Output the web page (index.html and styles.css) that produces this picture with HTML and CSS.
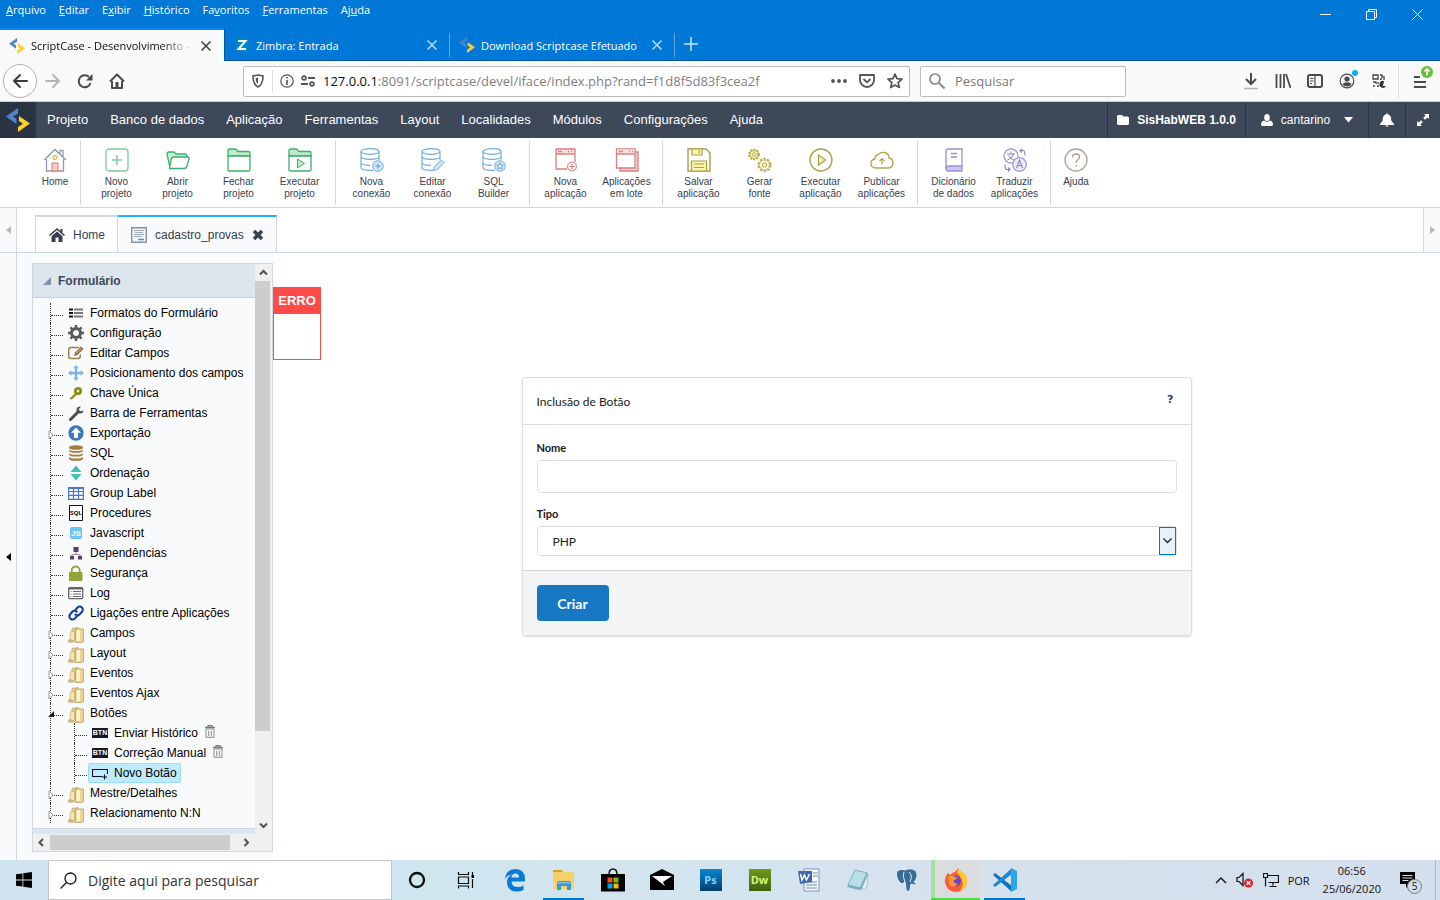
FILE: index.html
```html
<!DOCTYPE html>
<html lang="pt-br">

<head>
    <meta charset="UTF-8">
    <meta name="viewport" content="width=device-width, initial-scale=1.0">
    <title>ScriptCase - Desenvolvimento</title>
    <link rel="stylesheet" href="styles.css">
</head>

<body>
    <!-- símbolos reutilizados -->
    <svg class="defs" aria-hidden="true">
        <symbol id="sc" viewBox="0 0 24 24">
            <path d="M12 0L0 8.500 10.500 16v-5L7 8.500 12 5.500z" fill="#4f83cc" />
            <path d="M12 24l12-8.500L13 8v5l4 2.700-5 3.300z" fill="#fdcf2b" />
        </symbol>
        <symbol id="folder" viewBox="0 0 16 16">
            <path d="M4 1.500l6-1v12H4z" fill="#ead08d" stroke="#b89850" stroke-width=".6" />
            <path d="M7.500 2h8v12.500L13 15.500H7.500z" fill="#ecd595" stroke="#b3924b" stroke-width=".7" />
            <path d="M8.500 3h3.500v11H8.500z" fill="#fff3cc" />
            <path d="M2.500 4.500h4v9l-2 1.500h-3z" fill="#f7e5b1" stroke="#c5a865" stroke-width=".6" />
            <path d="M0 13l3-1 4 2-1 1.500H0z" fill="#cbb583" />
        </symbol>
        <symbol id="fechado" viewBox="0 0 6 10">
            <path d="M1 1l4 4-4 4z" fill="#fff" stroke="#999" />
        </symbol>
        <symbol id="db" viewBox="0 0 24 24">
            <g fill="none" stroke="#74aede" stroke-width="1.200">
                <ellipse cx="10" cy="3.500" rx="9" ry="2.800" />
                <path d="M1 3.500v5c0 1.600 4 2.800 9 2.800s9-1.200 9-2.800v-5M1 8.500v6c0 1.600 4 2.800 9 2.800M1 14.500v5c0 1.600 4 2.800 9 2.800h3M19 8v4" />
            </g>
        </symbol>
        <symbol id="trash" viewBox="0 0 12 13">
            <path d="M1 2.500h10M4 2V.7h4V2" fill="none" stroke="#777" stroke-width="1.300" />
            <path d="M2 4h8v8.300H2zM4.700 6v5M7.300 6v5" fill="none" stroke="#888" />
        </symbol>
        <symbol id="x" viewBox="0 0 12 12">
            <path d="M1.500 1.500l9 9M10.500 1.500l-9 9" fill="none" stroke="currentColor" stroke-width="1.500" />
        </symbol>
    </svg>

    <header class="navegador">
        <div class="titulo">
            <nav class="menu-nav">
                <a href="#"><u>A</u>rquivo</a>
                <a href="#"><u>E</u>ditar</a>
                <a href="#">E<u>x</u>ibir</a>
                <a href="#"><u>H</u>istórico</a>
                <a href="#">Fa<u>v</u>oritos</a>
                <a href="#"><u>F</u>erramentas</a>
                <a href="#">Aj<u>u</u>da</a>
            </nav>
            <div class="janela">
                <button aria-label="Minimizar"><svg width="11" height="11" viewBox="0 0 11 11"><path d="M0 5.500h11" stroke="#fff" /></svg></button>
                <button aria-label="Restaurar"><svg width="11" height="11" viewBox="0 0 11 11"><path d="M.5 2.500h8v8h-8zM2.500 2.500v-2h8v8h-2" fill="none" stroke="#fff" /></svg></button>
                <button aria-label="Fechar"><svg width="11" height="11" viewBox="0 0 11 11"><path d="M.5.5l10 10M10.500.5l-10 10" stroke="#fff" /></svg></button>
            </div>
        </div>

        <div class="guias">
            <div class="guia ativa">
                <svg width="16" height="16"><use href="#sc" /></svg>
                <span class="nome-guia">ScriptCase - Desenvolvimento -</span>
                <button aria-label="Fechar guia"><svg width="12" height="12"><use href="#x" /></svg></button>
            </div>
            <div class="guia">
                <svg width="16" height="16" viewBox="0 0 16 16"><rect x="1" y="1" width="14" height="14" rx="2" fill="#0087c3" /><path d="M4 4h7.500L4.500 12h7.500" fill="none" stroke="#fff" stroke-width="2" /></svg>
                <span class="nome-guia">Zimbra: Entrada</span>
                <button aria-label="Fechar guia"><svg width="12" height="12"><use href="#x" /></svg></button>
            </div>
            <div class="guia">
                <svg width="16" height="16"><use href="#sc" /></svg>
                <span class="nome-guia">Download Scriptcase Efetuado</span>
                <button aria-label="Fechar guia"><svg width="12" height="12"><use href="#x" /></svg></button>
            </div>
            <button class="nova-guia" aria-label="Nova guia"><svg width="14" height="14" viewBox="0 0 14 14"><path d="M7 0v14M0 7h14" stroke="#cfe6fa" stroke-width="1.500" /></svg></button>
        </div>

        <div class="barra-url">
            <div class="botoes-nav">
                <button class="voltar" aria-label="Voltar"><svg width="16" height="16" viewBox="0 0 16 16"><path d="M15 8H2M8 2L2 8l6 6" fill="none" stroke="#3b3b3d" stroke-width="2" stroke-linecap="round" stroke-linejoin="round" /></svg></button>
                <button aria-label="Avançar"><svg width="16" height="16" viewBox="0 0 16 16"><path d="M1 8h13M8 2l6 6-6 6" fill="none" stroke="#b5b5b6" stroke-width="2" stroke-linecap="round" stroke-linejoin="round" /></svg></button>
                <button aria-label="Recarregar"><svg width="16" height="16" viewBox="0 0 16 16"><path d="M13.500 10A6 6 0 1 1 12 4" fill="none" stroke="#4a4a4c" stroke-width="2" /><path d="M15.500 1v6.500H9z" fill="#4a4a4c" /></svg></button>
                <button aria-label="Página inicial"><svg width="16" height="16" viewBox="0 0 16 16"><path d="M1 8.500L8 1.500l7 7M3 8v7h10V8" fill="none" stroke="#4a4a4c" stroke-width="2" stroke-linejoin="round" /><path d="M6.500 9h3v6h-3z" fill="#4a4a4c" /></svg></button>
            </div>
            <div class="endereco">
                <svg width="14" height="14" viewBox="0 0 14 14"><path d="M7 1l5 1c0 6-1 9-5 11C3 11 2 8 2 2z" fill="none" stroke="#555" stroke-width="1.600" /><path d="M7 3.500v6.500c-2-1.500-2.300-3-2.300-6z" fill="#555" /></svg>
                <span class="risco"></span>
                <svg width="14" height="14" viewBox="0 0 14 14"><circle cx="7" cy="7" r="6.200" fill="none" stroke="#555" stroke-width="1.200" /><path d="M7 6v5M7 3v1.600" stroke="#555" stroke-width="1.600" /></svg>
                <svg width="14" height="12" viewBox="0 0 14 12"><g fill="none" stroke="#555" stroke-width="1.800"><circle cx="3" cy="3" r="1.900" /><path d="M7 3h7M0 9h7" /><circle cx="11" cy="9" r="1.900" /></g></svg>
                <a class="url" href="#"><b>127.0.0.1</b>:8091/scriptcase/devel/iface/index.php?rand=f1d8f5d83f3cea2f</a>
                <svg width="16" height="16" viewBox="0 0 16 16" fill="#555"><circle cx="2" cy="8" r="1.900" /><circle cx="8" cy="8" r="1.900" /><circle cx="14" cy="8" r="1.900" /></svg>
                <svg width="16" height="16" viewBox="0 0 16 16"><path d="M1 2h14v5a7 7 0 0 1-14 0z" fill="none" stroke="#555" stroke-width="1.800" stroke-linejoin="round" /><path d="M4.500 6L8 9.300 11.500 6" fill="none" stroke="#555" stroke-width="1.800" /></svg>
                <svg width="16" height="16" viewBox="0 0 16 16"><path d="M8 1l2 4.600 5 .5-3.800 3.400 1.100 5L8 12l-4.300 2.500 1.100-5L1 6.100l5-.5z" fill="none" stroke="#555" stroke-width="1.700" stroke-linejoin="round" /></svg>
            </div>
            <div class="busca">
                <svg width="16" height="16" viewBox="0 0 16 16"><circle cx="6" cy="6" r="5" fill="none" stroke="#888" stroke-width="1.700" /><path d="M10 10l5.500 5.500" stroke="#888" stroke-width="2" /></svg>
                <input type="text" placeholder="Pesquisar" aria-label="Pesquisar">
            </div>
            <div class="extras">
                <button aria-label="Downloads"><svg width="16" height="18" viewBox="0 0 16 18"><path d="M8 1v11M3 7l5 5 5-5" fill="none" stroke="#4a4a4c" stroke-width="2" /><path d="M1 16.500h14" stroke="#b5b5b6" stroke-width="1.500" /></svg></button>
                <button aria-label="Biblioteca"><svg width="16" height="16" viewBox="0 0 16 16"><path d="M1.500 1v14M5.500 1v14M9 1v14M11 1l4.500 14" stroke="#4a4a4c" stroke-width="1.800" /></svg></button>
                <button aria-label="Painel"><svg width="16" height="16" viewBox="0 0 16 16"><rect x="1" y="2" width="14" height="12" rx="2" fill="none" stroke="#4a4a4c" stroke-width="2" /><path d="M8 2v12M3 5.500h3.500M3 8h3.500M3 10.500h2" stroke="#4a4a4c" stroke-width="1.200" /></svg></button>
                <button class="conta" aria-label="Conta"><svg width="16" height="16" viewBox="0 0 16 16"><circle cx="8" cy="8" r="6.800" fill="none" stroke="#4a4a4c" stroke-width="1.200" /><circle cx="8" cy="6" r="2.600" fill="#4a4a4c" /><path d="M3.500 11.500C5 8.500 11 8.500 12.500 11.500 10 14 6 14 3.500 11.500z" fill="#4a4a4c" /></svg></button>
                <button aria-label="Extensão"><svg width="16" height="16" viewBox="0 0 16 16"><rect width="16" height="16" fill="#fff" /><path d="M2 2h5v4H2zM9 2h2v2h3M13 5v2M9 6h2M2 9h3v2M7 9v2M2 13h2M6 13h2" fill="none" stroke="#444" stroke-width="1.300" /><path d="M13 8a3.500 3.500 0 1 0 2 5h-3z" fill="#333" /></svg></button>
                <button class="hamburguer" aria-label="Menu"><svg width="14" height="14" viewBox="0 0 14 14"><path d="M1 3h6M1 8h12M1 13h12" stroke="#4a4a4c" stroke-width="1.800" /></svg><svg class="atualizar" width="12" height="12" viewBox="0 0 12 12"><circle cx="6" cy="6" r="6" fill="#6bbb3f" /><path d="M6 9.500V3M3.300 5.500L6 2.800l2.700 2.700" fill="none" stroke="#fff" stroke-width="1.500" /></svg></button>
            </div>
        </div>
    </header>

    <nav class="menu-app">
        <a class="logo" href="#" aria-label="Scriptcase"><svg width="24" height="24"><use href="#sc" /></svg></a>
        <div class="links">
            <a href="#">Projeto</a>
            <a href="#">Banco de dados</a>
            <a href="#">Aplicação</a>
            <a href="#">Ferramentas</a>
            <a href="#">Layout</a>
            <a href="#">Localidades</a>
            <a href="#">Módulos</a>
            <a href="#">Configurações</a>
            <a href="#">Ajuda</a>
        </div>
        <button class="projeto"><svg width="12" height="12" viewBox="0 0 12 12"><path d="M0 2l1-1h4l1 1.500h5l1 1V10l-1 1H1l-1-1z" fill="#fff" /></svg>SisHabWEB 1.0.0</button>
        <button class="usuario"><svg width="12" height="12" viewBox="0 0 12 12"><ellipse cx="6" cy="3.500" rx="2.800" ry="3.500" fill="#fff" /><path d="M3 6.500Q6 9 9 6.500q3 .5 3 4.500l-1 1H1l-1-1q0-4 3-4.500z" fill="#fff" /></svg>cantarino<svg class="seta" width="9" height="6" viewBox="0 0 9 6"><path d="M0 0h9L4.500 5.500z" fill="#fff" /></svg></button>
        <button class="sino" aria-label="Notificações"><svg width="14" height="14" viewBox="0 0 14 14"><path d="M7 0l1 1.500C11 2 11 5 11.500 8L14 11v1H0v-1l2.500-3C3 5 3 2 6 1.500zM5 12.500h4L7 14z" fill="#fff" /></svg></button>
        <button class="expandir" aria-label="Tela cheia"><svg width="12" height="12" viewBox="0 0 12 12"><path d="M7 0h5v5l-1.600-1.600L8 5.800 6.200 4l2.400-2.400zM5 12H0V7l1.600 1.600L4 6.200 5.800 8l-2.400 2.400z" fill="#fff" /></svg></button>
    </nav>

    <div class="ferramentas">
        <div class="grupo curto">
            <button><svg width="24" height="24" viewBox="0 0 24 24"><path d="M1 12L12 1.500 23 12M3.500 11v12h17V11M17 6V2.500h3V9" fill="none" stroke="#8f99ad" stroke-width="1.300" /><circle cx="12" cy="9.500" r="2" fill="#fdf3b0" stroke="#c6a93b" /><path d="M9 23v-8h6v8z" fill="#ffc9c9" stroke="#e07a7a" /></svg>Home</button>
        </div>
        <div class="grupo">
            <button><svg width="24" height="24" viewBox="0 0 24 24"><rect x="1" y="1" width="22" height="22" rx="3" fill="none" stroke="#7ecb99" stroke-width="1.300" /><path d="M12 7v10M7 12h10" stroke="#7ecb99" stroke-width="1.500" /></svg>Novo<br>projeto</button>
            <button><svg width="24" height="24" viewBox="0 0 24 24"><path d="M4 20L1 6q0-2 2-2h5l2 2h9q2 0 2 3" fill="#c7efd3" stroke="#3bb06b" stroke-width="1.300" /><path d="M3.500 20.500L5 12q.5-3 3-3h14q1.500 0 1 2l-2 7q-.7 2.500-3 2.500z" fill="#fff" stroke="#3bb06b" stroke-width="1.300" /></svg>Abrir<br>projeto</button>
            <button><svg width="24" height="24" viewBox="0 0 24 24"><path d="M1 8V2.500Q1 1 2.500 1h6L11 3.500h10.500Q23 3.500 23 5v3z" fill="#bdebcb" stroke="#3bb06b" stroke-width="1.300" /><path d="M1 8h22v13.500q0 1.500-1.500 1.500h-19Q1 23 1 21.500z" fill="#fff" stroke="#3bb06b" stroke-width="1.300" /></svg>Fechar<br>projeto</button>
            <button><svg width="24" height="24" viewBox="0 0 24 24"><path d="M1 8V2.500Q1 1 2.500 1h6L11 3.500h10.500Q23 3.500 23 5v3z" fill="#bdebcb" stroke="#3bb06b" stroke-width="1.300" /><path d="M1 8h22v13.500q0 1.500-1.500 1.500h-19Q1 23 1 21.500z" fill="#fff" stroke="#3bb06b" stroke-width="1.300" /><path d="M9.500 11l7 4.500-7 4.500z" fill="#bdebcb" stroke="#3bb06b" /></svg>Executar<br>projeto</button>
        </div>
        <div class="grupo">
            <button><svg width="24" height="24" viewBox="0 0 24 24"><use href="#db" /><circle cx="18" cy="18" r="5.300" fill="#cfe5f8" stroke="#74aede" /><path d="M18 15.500v5M15.500 18h5" stroke="#5b98cf" /></svg>Nova<br>conexão</button>
            <button><svg width="24" height="24" viewBox="0 0 24 24"><use href="#db" /><path d="M12.500 22.500l1-4 7-6.500 2.500 2.500-6.500 7z" fill="#cfe5f8" stroke="#74aede" /></svg>Editar<br>conexão</button>
            <button><svg width="24" height="24" viewBox="0 0 24 24"><use href="#db" /><circle cx="18" cy="18" r="5.300" fill="#cfe5f8" stroke="#74aede" /><path d="M18 14.800l1 2.200 2.200.2-1.700 1.500.5 2.300-2-1.200-2 1.200.5-2.300-1.700-1.500 2.200-.2z" fill="#fff" stroke="#5b98cf" stroke-width=".9" /></svg>SQL<br>Builder</button>
        </div>
        <div class="grupo">
            <button><svg width="24" height="24" viewBox="0 0 24 24"><path d="M2 1h19v5H2z" fill="#fbe0e0" /><path d="M2 1h19v13M2 1v20h11M2 6h19M4 3.500h4M14 3.500h1M17 3.500h1" fill="none" stroke="#d98080" stroke-width="1.300" /><circle cx="18" cy="18.500" r="4.500" fill="#fdeaea" stroke="#d98080" /><path d="M18 16v5M15.500 18.500h5" stroke="#d98080" /></svg>Nova<br>aplicação</button>
            <button><svg width="24" height="24" viewBox="0 0 24 24"><path d="M20 4h3v19H5v-3" fill="#f8cfcf" stroke="#d98080" stroke-width="1.300" /><path d="M1.500 1H20v19H1.500z" fill="#fff" stroke="#d98080" stroke-width="1.300" /><path d="M2 1.500h17.500V6H2z" fill="#fbe0e0" /><path d="M2 6h18M4 3.500h4M14 3.500h1M17 3.500h1" stroke="#d98080" stroke-width="1.300" /></svg>Aplicações<br>em lote</button>
        </div>
        <div class="grupo">
            <button><svg width="24" height="24" viewBox="0 0 24 24"><path d="M1 1h18l4 4v18H1z" fill="#fff" stroke="#ab9f45" stroke-width="1.400" /><path d="M5 1h10v6H5z" fill="#fbf4a9" stroke="#ab9f45" stroke-width="1.200" /><path d="M12 2.500v3" stroke="#ab9f45" stroke-width="1.300" /><path d="M4.500 13h15v10h-15z" fill="#fbf4a9" stroke="#ab9f45" stroke-width="1.200" /><path d="M7 16h10M7 19.500h10" stroke="#ab9f45" stroke-width="1.200" /></svg>Salvar<br>aplicação</button>
            <button><svg width="24" height="24" viewBox="0 0 24 24"><g fill="#fbf4a9" stroke="#b3a346"><circle cx="6" cy="6.500" r="5" stroke-width="1.600" stroke-dasharray="2 1.200" /><circle cx="6" cy="6.500" r="4" stroke-width=".8" /><circle cx="6" cy="6.500" r="1.600" fill="#fff" /><circle cx="16.500" cy="17" r="6.200" fill="#fff" stroke-width="1.600" stroke-dasharray="2.500 1.400" /><circle cx="16.500" cy="17" r="5" fill="#fff" stroke-width=".9" /><circle cx="16.500" cy="17" r="2.200" /></g></svg>Gerar<br>fonte</button>
            <button><svg width="24" height="24" viewBox="0 0 24 24"><circle cx="12" cy="12" r="11" fill="none" stroke="#ab9f45" stroke-width="1.300" /><path d="M9.500 7l7 5-7 5z" fill="#fbf4a9" stroke="#ab9f45" stroke-width="1.200" /></svg>Executar<br>aplicação</button>
            <button><svg width="24" height="24" viewBox="0 0 24 24"><path d="M6 20q-5 0-5-4.500 0-4 4-4.500 0-4 3.500-4.500Q10.500 4 14.500 4.500 19 5.500 19 10q4 1 4 5 0 5-5 5z" fill="none" stroke="#b5a34e" stroke-width="1.300" /><path d="M12 16.500v-6M9.500 13l2.500-2.500 2.500 2.500" fill="none" stroke="#b5a34e" stroke-width="1.200" /></svg>Publicar<br>aplicações</button>
        </div>
        <div class="grupo">
            <button><svg width="24" height="24" viewBox="0 0 24 24"><path d="M4 21V3q0-2 2-2h14v17" fill="#fff" stroke="#9c8fd4" stroke-width="1.300" /><path d="M20 18v5H6q-2 0-2-2.500T6 18z" fill="#cdc4f0" stroke="#9c8fd4" stroke-width="1.300" /><path d="M9 5.500h6M9 9h6" stroke="#9c8fd4" stroke-width="1.300" /></svg>Dicionário<br>de dados</button>
            <button><svg width="24" height="24" viewBox="0 0 24 24"><circle cx="8" cy="8" r="7" fill="#fff" stroke="#a79bda" stroke-width="1.300" /><path d="M4 6h8M8 3.500V6M10.500 6Q9 10.500 4.500 12M5.500 7.500q2 3.500 5.500 4.500" fill="none" stroke="#8b7ec9" /><circle cx="16.500" cy="16.500" r="6.800" fill="#eeeafb" stroke="#a79bda" stroke-width="1.300" /><path d="M13.500 20l3-8 3 8M14.500 17.500h4M17 2.500h3q2 0 2 5M19 1l-2 1.500 2 2M7 21.500H4q-2 0-2-5M5 19.500l2 2-2 2" fill="none" stroke="#8b7ec9" stroke-width="1.100" /></svg>Traduzir<br>aplicações</button>
        </div>
        <div class="grupo curto">
            <button><svg width="24" height="24" viewBox="0 0 24 24"><circle cx="12" cy="12" r="11" fill="none" stroke="#b0a398" stroke-width="1.300" /><path d="M8.500 9.500q0-3.500 3.500-3.500t3.500 3q0 1.500-2 3-1.500 1-1.500 3M12 17v1.500" fill="none" stroke="#a89b90" stroke-width="1.300" /></svg>Ajuda</button>
        </div>
    </div>

    <div class="abas">
        <button class="rolar esquerda" aria-label="Rolar para a esquerda"><svg width="5" height="8" viewBox="0 0 5 8"><path d="M5 0v8L0 4z" fill="#b5b9be" /></svg></button>
        <div class="lista-abas">
            <a class="aba" href="#"><svg width="16" height="14" viewBox="0 0 16 14"><path d="M8 0L0 7l1 1 7-6 7 6 1-1-2.500-2.200V1h-2v2z" fill="#37404f" /><path d="M8 3.500l5.500 4.700V14H9.500V9.500h-3V14h-4V8.200z" fill="#37404f" /></svg>Home</a>
            <a class="aba atual" href="#"><svg width="16" height="16" viewBox="0 0 16 16"><path d="M.7.7h14.600v14.600H.7z" fill="#f5f8fc" stroke="#8b929c" stroke-width="1.400" /><path d="M3 3.500h10M4 5.500h8M3 7.500h10M3 9.500h8" stroke="#9ba9bb" /><path d="M7 12.500h6" stroke="#2fa6c5" stroke-width="1.500" /></svg>cadastro_provas<svg width="12" height="12" viewBox="0 0 12 12"><path d="M2 2l8 8M10 2l-8 8" stroke="#37404f" stroke-width="3.500" /></svg></a>
        </div>
        <button class="rolar direita" aria-label="Rolar para a direita"><svg width="5" height="8" viewBox="0 0 5 8"><path d="M0 0v8l5-4z" fill="#b5b9be" /></svg></button>
    </div>

    <main class="corpo">
        <button class="recolher" aria-label="Recolher painel"><svg width="5" height="8" viewBox="0 0 5 8"><path d="M5 0v8L0 4z" fill="#000" /></svg></button>

        <aside class="lateral">
            <div class="painel">
                <div class="conteudo-painel">
                    <h2><svg width="8" height="8" viewBox="0 0 8 8"><path d="M8 0v8H0z" fill="#8392a8" /></svg>Formulário</h2>
                    <ul class="arvore">
                        <li><a href="#"><svg width="16" height="16" viewBox="0 0 16 16"><path d="M1 4.500h4M1 8h4M1 11.500h4" stroke="#111" stroke-width="2" /><path d="M6 4.500h9M6 8h9M6 11.500h9" stroke="#777" stroke-width="2" /></svg>Formatos do Formulário</a></li>
                        <li><a href="#"><svg width="16" height="16" viewBox="0 0 16 16"><circle cx="8" cy="8" r="4.500" fill="none" stroke="#5a5a5a" stroke-width="3" /><path d="M8 0v3M8 13v3M0 8h3M13 8h3M2.400 2.400l2 2M11.600 11.600l2 2M13.600 2.400l-2 2M4.400 11.600l-2 2" stroke="#5a5a5a" stroke-width="2.500" /></svg>Configuração</a></li>
                        <li><a href="#"><svg width="16" height="16" viewBox="0 0 16 16"><path d="M11 2.500H3Q.7 2.500.7 5v6q0 2.500 2.300 2.500h7q2.300 0 2.300-2.500V9.500" fill="none" stroke="#a07b4c" stroke-width="1.400" /><path d="M6 11l1-3.500 6-6 2.500 2.500-6 6z" fill="#8c6a3c" /><path d="M8 8.500l5-5" stroke="#e6cfa8" /></svg>Editar Campos</a></li>
                        <li><a href="#"><svg width="16" height="16" viewBox="0 0 16 16"><path d="M8 0l3 3.300H9.200v3.500h3.500V5L16 8l-3.300 3V9.200H9.200v3.500H11L8 16l-3-3.300h1.800V9.200H3.300V11L0 8l3.300-3v1.800h3.500V3.300H5z" fill="#7eb5e8" /></svg>Posicionamento dos campos</a></li>
                        <li><a href="#"><svg width="16" height="16" viewBox="0 0 16 16"><path d="M8 7.500l2 2-2 .5-.5 1.500-1.500.2-.4 1.500-1.600.5L2.500 15 2 13z" fill="#8f8f12" /><circle cx="10" cy="6" r="2.700" fill="none" stroke="#8f8f12" stroke-width="2.800" /></svg>Chave Única</a></li>
                        <li><a href="#"><svg width="16" height="16" viewBox="0 0 16 16"><path d="M2.500 14.500l7-7" stroke="#4c4c4c" stroke-width="3" stroke-linecap="round" /><path d="M13 1.500Q9 1 8.500 4.500t3 4 4-3l-3 .7-2-1.700z" fill="#4c4c4c" /></svg>Barra de Ferramentas</a></li>
                        <li><svg class="marca" width="6" height="10"><use href="#fechado" /></svg><a href="#"><svg width="16" height="16" viewBox="0 0 16 16"><circle cx="8" cy="8" r="7.700" fill="#3d79b8" /><path d="M8 2.500l5 5.200h-3V13H6V7.700H3z" fill="#fff" /></svg>Exportação</a></li>
                        <li><a href="#"><svg width="16" height="16" viewBox="0 0 16 16" fill="#a37c3d"><ellipse cx="8" cy="2.500" rx="7" ry="2.300" /><path d="M1 4q0 2 7 2t7-2v1.500q0 2.300-7 2.300T1 5.500zM1 7.700q0 2 7 2t7-2v1.500q0 2.300-7 2.300T1 9.200zM1 11.400q0 2 7 2t7-2v1.800q0 2.600-7 2.600T1 13.200z" /></svg>SQL</a></li>
                        <li><a href="#"><svg width="16" height="16" viewBox="0 0 16 16"><path d="M8 .5L13.500 7h-11zM8 15.500L13.500 9h-11z" fill="#45c1b8" /></svg>Ordenação</a></li>
                        <li><a href="#"><svg width="16" height="16" viewBox="0 0 16 16"><path d="M.6 2.500h14.800v11.800H.6zM.6 6.500h14.800M.6 10.300h14.800M5.500 3v11M10.500 3v11" fill="none" stroke="#4a76d8" stroke-width="1.200" /><path d="M0 2h16v2H0z" fill="#4a76d8" /></svg>Group Label</a></li>
                        <li><a href="#"><svg width="16" height="16" viewBox="0 0 16 16"><path d="M1.500.5h13v15h-13z" fill="#fff" stroke="#111" /><text class="txt-sql" x="8" y="10" text-anchor="middle">SQL</text></svg>Procedures</a></li>
                        <li><a href="#"><svg width="16" height="16" viewBox="0 0 16 16"><rect x="2" y="2" width="12" height="12" rx="2" fill="#6cc3f5" /><text class="txt-js" x="8" y="11" text-anchor="middle">JS</text></svg>Javascript</a></li>
                        <li><a href="#"><svg width="16" height="16" viewBox="0 0 16 16"><path d="M8 7v3M4 12V9.500h8V12" fill="none" stroke="#9f93ad" stroke-width="1.200" /><path d="M5.500 2h5v5h-5zM2 11h4v3.500H2zM10 11h4v3.500h-4z" fill="#563d6b" /></svg>Dependências</a></li>
                        <li><a href="#"><svg width="16" height="16" viewBox="0 0 16 16"><path d="M3.700 8V5.500a4 4 0 0 1 8 0V8" fill="none" stroke="#96a23a" stroke-width="1.800" /><rect x="1" y="7" width="13.500" height="9" rx="1" fill="#96a23a" /></svg>Segurança</a></li>
                        <li><a href="#"><svg width="16" height="16" viewBox="0 0 16 16"><rect x=".7" y="2.700" width="14" height="11" rx="1" fill="#fff" stroke="#666" stroke-width="1.300" /><path d="M1 3.500h14" stroke="#666" stroke-width="2" /><path d="M2.500 6.500h1M2.500 9h1M2.500 11.500h1M5 6.500h8M5 9h8M5 11.500h8" stroke="#666" /></svg>Log</a></li>
                        <li><a href="#"><svg width="16" height="16" viewBox="0 0 16 16"><g fill="none" stroke="#1b3f9c" stroke-width="2.100" stroke-linecap="round"><path d="M7 5.500l2.500-3a3 3 0 0 1 4.500 4.300L11.500 9.500a3 3 0 0 1-4 0" /><path d="M9.500 10.500L7 13.300A3 3 0 0 1 2 9.500l2.500-3a3 3 0 0 1 4.300.2" /></g></svg>Ligações entre Aplicações</a></li>
                        <li><svg class="marca" width="6" height="10"><use href="#fechado" /></svg><a href="#"><svg class="pasta" width="16" height="16"><use href="#folder" /></svg>Campos</a></li>
                        <li><svg class="marca" width="6" height="10"><use href="#fechado" /></svg><a href="#"><svg class="pasta" width="16" height="16"><use href="#folder" /></svg>Layout</a></li>
                        <li><svg class="marca" width="6" height="10"><use href="#fechado" /></svg><a href="#"><svg class="pasta" width="16" height="16"><use href="#folder" /></svg>Eventos</a></li>
                        <li><svg class="marca" width="6" height="10"><use href="#fechado" /></svg><a href="#"><svg class="pasta" width="16" height="16"><use href="#folder" /></svg>Eventos Ajax</a></li>
                        <li><svg class="marca" width="6" height="10" viewBox="0 0 6 10"><path d="M6 1v6H0z" fill="#222" /></svg><a href="#"><svg class="pasta" width="16" height="16"><use href="#folder" /></svg>Botões</a>
                            <ul>
                                <li><a href="#"><span class="btn-mini">BTN</span>Enviar Histórico</a><button class="lixo" aria-label="Excluir"><svg width="12" height="13"><use href="#trash" /></svg></button></li>
                                <li><a href="#"><span class="btn-mini">BTN</span>Correção Manual</a><button class="lixo" aria-label="Excluir"><svg width="12" height="13"><use href="#trash" /></svg></button></li>
                                <li class="marcado"><a href="#"><svg width="16" height="14" viewBox="0 0 16 14"><path d="M10 10.500H.5v-7h15V8M12.500 8.500v5M10 11h5" fill="none" stroke="#111" stroke-width="1.100" /></svg>Novo Botão</a></li>
                            </ul>
                        </li>
                        <li><svg class="marca" width="6" height="10"><use href="#fechado" /></svg><a href="#"><svg class="pasta" width="16" height="16"><use href="#folder" /></svg>Mestre/Detalhes</a></li>
                        <li><svg class="marca" width="6" height="10"><use href="#fechado" /></svg><a href="#"><svg class="pasta" width="16" height="16"><use href="#folder" /></svg>Relacionamento N:N</a></li>
                    </ul>
                </div>
                <div class="barra-v">
                    <svg width="17" height="17" viewBox="0 0 17 17"><path d="M5 10.500L8.500 7l3.500 3.500" fill="none" stroke="#505050" stroke-width="2" /></svg>
                    <div class="trilho"><div class="polegar"></div></div>
                    <svg width="17" height="17" viewBox="0 0 17 17"><path d="M5 6.500L8.500 10 12 6.500" fill="none" stroke="#505050" stroke-width="2" /></svg>
                </div>
                <div class="barra-h">
                    <svg width="17" height="17" viewBox="0 0 17 17"><path d="M10 5L6.500 8.500 10 12" fill="none" stroke="#505050" stroke-width="2" /></svg>
                    <div class="trilho"><div class="polegar"></div></div>
                    <svg width="17" height="17" viewBox="0 0 17 17"><path d="M6.500 5L10 8.500 6.500 12" fill="none" stroke="#505050" stroke-width="2" /></svg>
                </div>
                <div class="canto"></div>
            </div>
        </aside>

        <section class="area">
            <div class="erro"><strong>ERRO</strong></div>

            <form class="cartao">
                <div class="topo-cartao">
                    <span>Inclusão de Botão</span>
                    <a href="#" aria-label="Ajuda">?</a>
                </div>
                <div class="campos">
                    <label for="nome">Nome</label>
                    <input id="nome" type="text">
                    <label for="tipo">Tipo</label>
                    <div class="caixa-tipo">
                        <select id="tipo">
                            <option>PHP</option>
                            <option>Javascript</option>
                            <option>Ajax</option>
                            <option>Link</option>
                        </select>
                        <span class="abrir"><svg width="9" height="6" viewBox="0 0 9 6"><path d="M.5.5l4 4 4-4" fill="none" stroke="#222" stroke-width="1.300" /></svg></span>
                    </div>
                </div>
                <div class="rodape-cartao">
                    <button type="button">Criar</button>
                </div>
            </form>
        </section>
    </main>

    <footer class="tarefas">
        <button class="iniciar" aria-label="Iniciar"><svg width="16" height="16" viewBox="0 0 16 16"><path d="M0 2.300L6.500 1.400v6.200H0zM7.300 1.300L16 0v7.600H7.300zM0 8.400h6.500v6.200L0 13.700zM7.300 8.400H16V16l-8.700-1.300z" /></svg></button>
        <div class="procurar">
            <svg width="17" height="17" viewBox="0 0 17 17"><circle cx="10.500" cy="6.500" r="5.500" fill="none" stroke="#111" stroke-width="1.300" /><path d="M6.500 10.500L.5 16.500" stroke="#111" stroke-width="1.300" /></svg>
            <input type="text" placeholder="Digite aqui para pesquisar" aria-label="Digite aqui para pesquisar">
        </div>
        <div class="apps">
            <button aria-label="Cortana"><svg width="18" height="18" viewBox="0 0 18 18"><circle cx="9" cy="9" r="7" fill="none" stroke="#111" stroke-width="2.300" /></svg></button>
            <button aria-label="Visão de tarefas"><svg width="18" height="18" viewBox="0 0 18 18"><path d="M1.500 1v2.500h10V1M1.500 6h10v6.500h-10zM1.500 17.500V15h10v2.500M15.500 1v3M15.500 8v9" fill="none" stroke="#111" stroke-width="1.200" /><path d="M14.500 4h2.500v3h-2.500z" /></svg></button>
            <button aria-label="Edge"><svg width="22" height="24" viewBox="0 0 22 24"><path d="M1 11Q2 1 11.500 1 21 1.500 21 11v2.500H7.500Q8 19 13.500 19q3.500 0 6-1.500V22q-3 1.500-7 1.500Q3 23 3 14q0-5 5-7.500Q3 7 1 11zM7.500 9.500H15Q15 5.500 11.500 5.500T7.500 9.500z" fill="#0a7ad6" /></svg></button>
            <button class="rodando" aria-label="Explorador"><svg width="22" height="22" viewBox="0 0 22 22"><path d="M0 1h9l2 2h10v17H0z" fill="#f8d069" /><path d="M0 1h9l1 2H0z" fill="#dfa022" /><path d="M4 21v-7q0-2 2-2h10q2 0 2 2v7h-4v-4H8v4z" fill="#3d97d9" /><path d="M5 13h12v1.500H5z" fill="#7cc3ee" /></svg></button>
            <button aria-label="Loja"><svg width="24" height="26" viewBox="0 0 24 26"><path d="M0 7h24v17.500H0z" /><path d="M8 7.500Q8 2 12 2t4 5.500" fill="none" stroke="#111" stroke-width="1.500" /><path d="M6.500 10.500h5v5h-5z" fill="#f25022" /><path d="M12.500 10.500h5v5h-5z" fill="#7fba00" /><path d="M6.500 16.500h5v5h-5z" fill="#00a4ef" /><path d="M12.500 16.500h5v5h-5z" fill="#ffb900" /></svg></button>
            <button aria-label="Email"><svg width="24" height="22" viewBox="0 0 24 22"><path d="M12 0l12 6v15H0V6z" /><path d="M2 7h20l-9 6 2 4z" fill="#f3f7fa" /></svg></button>
            <button aria-label="Photoshop"><span class="adobe ps">Ps</span></button>
            <button aria-label="Dreamweaver"><span class="adobe dw">Dw</span></button>
            <button aria-label="Word"><svg width="24" height="24" viewBox="0 0 24 24"><path d="M7 1h15v22H7z" fill="#f6f9fd" stroke="#7d93b8" /><path d="M16 5h5M16 8h5M9 14h11M9 17h11M9 20h11" stroke="#6d88ba" /><path d="M1 3h14v11L3 16z" fill="#4068b1" /><path d="M3.500 6l1.500 6 2.500-5 2 5 3-6" fill="none" stroke="#fff" stroke-width="1.500" /></svg></button>
            <button aria-label="Bloco de notas"><svg width="24" height="24" viewBox="0 0 24 24"><path d="M9 2l13 3-5 16-4 1L1 19z" fill="#7cb2c0" /><path d="M9 2l12 3-7 15-12-3z" fill="#b8dfe8" stroke="#6f9eab" stroke-width=".7" /><path d="M22 6l-1 13-6 3z" fill="#e8f2f5" stroke="#8aa" stroke-width=".6" /></svg></button>
            <button aria-label="PostgreSQL"><svg width="24" height="24" viewBox="0 0 24 24"><path d="M2 3Q6 0 10 2q6-3 11 1 3 6-2 11l3 1q-2 3-6 1l-1 6q-3 3-4-1l-1-7q-3 3-5 1Q0 8 2 3z" fill="#3a6c98" stroke="#e6eef5" /><path d="M9 4Q7 8 10 14M14 4q4 3 1 10" fill="none" stroke="#e6eef5" /></svg></button>
            <button class="rodando foco" aria-label="Firefox"><svg width="24" height="24" viewBox="0 0 24 24"><path d="M2 8l2-3 2 2q3-3 5-3l3-4q1 3 4 4 5 3 5 9a11 11 0 0 1-22 0q0-3 1-5z" fill="#ff5a36" /><path d="M14 0q1 3 4 4 5 3 5 9 0 7-7 10 4-6 2-11T13 5z" fill="#ffc928" /><circle cx="11.500" cy="13" r="5.500" fill="#6b46c5" /><path d="M4 8q4-1 7 1l3 1-4 2q-2 3 4 4-5 5-9 0z" fill="#ff9633" /></svg></button>
            <button class="rodando" aria-label="VS Code"><svg width="26" height="26" viewBox="0 0 26 26"><path d="M1 8l2-2 17 13v6z" fill="#1071bd" /><path d="M1 18l2 2L20 7V1z" fill="#2088d2" /><path d="M19 1l6 3v18l-6 3z" fill="#2ba6ee" /></svg></button>
        </div>
        <div class="bandeja">
            <svg width="12" height="8" viewBox="0 0 12 8"><path d="M1 7l5-5 5 5" fill="none" stroke="#111" stroke-width="1.400" /></svg>
            <svg width="18" height="16" viewBox="0 0 18 16"><path d="M1 5.500h2l4-4v12l-4-4H1z" fill="none" stroke="#111" stroke-width="1.200" /><circle cx="12.500" cy="11" r="4.500" fill="#dc2330" /><path d="M10.700 9.200l3.600 3.600M14.300 9.200l-3.600 3.600" stroke="#fff" stroke-width="1.300" /></svg>
            <svg width="16" height="16" viewBox="0 0 16 16"><path d="M4 3.500h11.500v7H5.500M10 10.500v3M6.500 14.500h7M.5 1.500h4v4h-4zM2.500 5.500v9" fill="none" stroke="#111" stroke-width="1.200" /></svg>
            <span>POR</span>
            <time class="relogio">06:56<br>25/06/2020</time>
            <button class="avisos" aria-label="Avisos"><svg width="18" height="18" viewBox="0 0 18 18"><path d="M1 1h15v12h-6l-3 4v-4H1z" /><path d="M3.500 4.500h10M3.500 7h10M3.500 9.500h6" stroke="#d3deeb" /></svg><span>5</span></button>
        </div>
    </footer>
</body>

</html>
```
FILE: styles.css
```css
* {
    box-sizing: border-box;
}

body {
    margin: 0;
    min-height: 100vh;
    display: flex;
    flex-direction: column;
    background: #fff;
    font-family: "Liberation Sans", Arial, sans-serif;
    font-size: 12px;
}

a {
    color: inherit;
    text-decoration: none;
}

button {
    display: flex;
    align-items: center;
    justify-content: center;
    padding: 0;
    border: 0;
    background: none;
    color: inherit;
    font: inherit;
}

svg {
    flex: none;
}

.defs {
    position: absolute;
    width: 0;
    height: 0;
}

/* navegador */
.navegador {
    background: #0078d7;
    color: #fff;
    font-family: "Open Sans", "Noto Sans", sans-serif;
    font-size: 11px;
}

.titulo {
    display: flex;
    justify-content: space-between;
    height: 28px;
}

.menu-nav {
    display: flex;
    gap: 13px;
    padding-left: 6px;
    line-height: 20px;
}

.janela {
    display: flex;
}

.janela button {
    width: 46px;
}

.guias {
    display: flex;
    height: 33px;
    border-bottom: 1px solid #0057a0;
}

.guia {
    display: flex;
    align-items: center;
    gap: 6px;
    width: 225px;
    padding: 2px 10px 0 9px;
    position: relative;
}

.guia + .guia::after {
    content: "";
    align-self: center;
    height: 24px;
    border-right: 1px solid #59a8e6;
    position: absolute;
    right: 0;
}

.guia button {
    width: 16px;
    color: #b5d9f7;
}

.guia.ativa {
    height: 33px;
    padding-top: 0;
    background: #f9f9fa;
    border-top: 2px solid #0a84ff;
    border-right: 1px solid #0057a0;
    color: #0c0c0d;
}

.guia.ativa button {
    color: #3b3b3d;
}

.guia.ativa .nome-guia {
    -webkit-mask-image: linear-gradient(to left, transparent, #000 30px);
    mask-image: linear-gradient(to left, transparent, #000 30px);
}

.nome-guia {
    flex: 1;
    white-space: nowrap;
}

.nova-guia {
    width: 32px;
}

.barra-url {
    display: flex;
    align-items: center;
    gap: 10px;
    height: 41px;
    background: #f9f9fa;
    border-bottom: 1px solid #ccc;
    font-size: 13px;
}

.botoes-nav {
    display: flex;
    align-items: center;
    width: 233px;
    padding-left: 3px;
}

.botoes-nav button {
    width: 32px;
    height: 34px;
}

.botoes-nav .voltar {
    width: 34px;
    border: 1px solid #b1b1b3;
    border-radius: 50%;
    background: #fff;
}

.endereco,
.busca {
    display: flex;
    align-items: center;
    height: 31px;
    background: #fff;
    border: 1px solid #bbb;
    border-radius: 2px;
}

.endereco {
    flex: 1;
    gap: 7px;
    padding: 0 6px 0 7px;
}

.endereco > svg:nth-last-child(-n+2) {
    margin-left: 5px;
}

.risco {
    height: 22px;
    border-left: 1px solid #ddd;
}

.url {
    flex: 1;
    padding-left: 1px;
    color: #808080;
    white-space: nowrap;
}

.url b {
    font-weight: normal;
    color: #0c0c0d;
}

.busca {
    gap: 10px;
    width: 206px;
    padding: 0 8px;
}

.busca input {
    flex: 1;
    min-width: 0;
    border: 0;
    padding: 0;
    background: none;
    font: inherit;
}

.busca input::placeholder {
    color: #777;
}

.extras {
    display: flex;
    align-items: center;
    padding-left: 99px;
}

.extras button {
    position: relative;
    width: 32px;
    height: 34px;
}

.extras .conta::after {
    content: "";
    position: absolute;
    top: 6px;
    right: 5px;
    width: 6px;
    height: 6px;
    border-radius: 50%;
    background: #00b3f4;
}

.extras .hamburguer {
    width: 42px;
    border-left: 1px solid #ddd;
    margin-left: 3px;
}

.atualizar {
    position: absolute;
    top: 2px;
    right: 7px;
}

/* menu do scriptcase */
.menu-app {
    display: flex;
    height: 36px;
    background: #3d4859;
    color: #fff;
    font-size: 13px;
}

.logo {
    display: flex;
    align-items: center;
    justify-content: center;
    width: 36px;
    background: #2a3342;
}

.links {
    display: flex;
    flex: 1;
    align-items: center;
    gap: 22px;
    padding: 0 0 2px 11px;
}

.menu-app button {
    gap: 8px;
    border-left: 1px solid #2a3342;
}

.menu-app .projeto {
    width: 138px;
    font-size: 12px;
    font-weight: bold;
}

.usuario {
    width: 123px;
    font-size: 12px;
}

.usuario .seta {
    margin-left: 6px;
}

.sino {
    width: 37px;
}

.expandir {
    width: 35px;
}

/* barra de ferramentas */
.ferramentas {
    display: flex;
    height: 70px;
    padding: 3px 0 2px 30px;
    border-bottom: 1px solid #ccd9e0;
    color: #37404f;
    font-size: 10px;
    line-height: 12px;
}

.grupo {
    display: flex;
    padding: 0 5px;
    border-right: 1px solid #ccd9e0;
}

.grupo button {
    flex-direction: column;
    justify-content: flex-start;
    width: 61px;
    padding-top: 7px;
}

.grupo svg {
    margin-bottom: 4px;
}

.grupo.curto {
    padding: 0;
}

.grupo.curto button {
    width: 50px;
}

.grupo:last-child {
    border: 0;
}

/* abas */
.abas {
    display: flex;
    height: 45px;
    border-bottom: 1px solid #ccd9e0;
}

.rolar {
    width: 17px;
    background: #f9fafc;
}

.esquerda {
    border-right: 1px solid #ccd9e0;
}

.direita {
    border-left: 1px solid #ccd9e0;
}

.lista-abas {
    display: flex;
    flex: 1;
    align-items: flex-end;
    padding-left: 18px;
}

.aba {
    display: flex;
    align-items: center;
    gap: 8px;
    height: 37px;
    padding: 0 12px 0 13px;
    border: 1px solid #ccd9e0;
    border-top-width: 2px;
    border-bottom: 0;
    color: #37404f;
    font-size: 12px;
}

.aba.atual {
    border-top-color: #1fb0ff;
    border-left: 0;
    background: #f9fafc;
}

/* corpo */
.corpo {
    display: flex;
    flex: 1;
}

.recolher {
    width: 17px;
    background: #f9fafc;
    border-right: 1px solid #ccd9e0;
}

.lateral {
    width: 256px;
    padding: 10px 0 8px 15px;
    background: #f9fafc;
}

.painel {
    display: grid;
    grid-template-columns: 1fr 17px;
    grid-template-rows: auto 17px;
    border: 1px solid #ccd9e0;
}

.conteudo-painel {
    min-width: 0;
    padding-bottom: 5px;
    background: #dde5ee;
}

.painel h2 {
    display: flex;
    align-items: center;
    gap: 7px;
    height: 34px;
    margin: 0;
    padding-left: 10px;
    border-bottom: 1px solid #c5d3de;
    color: #3d4859;
    font-size: 12px;
}

.painel ul {
    margin: 0;
    padding: 0;
    list-style: none;
}

.conteudo-painel > .arvore {
    padding: 5px 0 5px 17px;
    border-bottom: 1px solid #c5d3de;
    background: #f9fafc;
}

.painel li {
    display: flex;
    flex-wrap: wrap;
    position: relative;
    border-left: 1px dotted #333;
}

.painel li::before {
    content: "";
    width: 12px;
    height: 12px;
    border-bottom: 1px dotted #333;
}

.painel li a {
    display: flex;
    align-items: center;
    gap: 6px;
    height: 20px;
    margin-left: 5px;
    color: #000;
    white-space: nowrap;
}

.painel li ul {
    width: 100%;
    padding-left: 23px;
}

.painel .pasta {
    align-self: flex-end;
}

.marca {
    position: absolute;
    left: -3px;
    top: 7px;
}

.btn-mini {
    width: 16px;
    height: 10px;
    background: #141a2b;
    color: #fff;
    font-size: 7px;
    font-weight: bold;
    line-height: 10px;
    text-align: center;
}

.lixo {
    height: 16px;
    margin-left: 6px;
}

.painel .marcado a {
    margin-left: 1px;
    padding: 0 3px;
    border: 1px solid #99defd;
    border-radius: 2px;
    background: #beebff;
}

.txt-sql {
    font-size: 6px;
    font-weight: bold;
}

.txt-js {
    fill: #fff;
    font-size: 8px;
    font-weight: bold;
}

.barra-v,
.barra-h {
    display: flex;
    background: #f0f0f0;
}

.barra-v {
    flex-direction: column;
}

.barra-h {
    grid-row: 2;
}

.canto {
    background: #f0f0f0;
}

.trilho {
    flex: 1;
}

.polegar {
    background: #cdcdcd;
}

.barra-v .polegar {
    height: 84%;
    margin-right: 2px;
}

.barra-h .polegar {
    width: 96%;
    height: 15px;
    margin-top: 1px;
}

.area {
    flex: 1;
    padding-top: 34px;
}

.erro {
    width: 48px;
    height: 73px;
    margin-bottom: 17px;
    border: 1px solid #ff4a4a;
}

.erro strong {
    display: block;
    background: #ff4a4a;
    color: #fff;
    font-size: 13px;
    line-height: 26px;
    text-align: center;
}

/* formulário */
.cartao {
    max-width: 670px;
    margin: 0 auto;
    border: 1px solid #dbdcdd;
    border-radius: 4px;
    box-shadow: 0 1px 2px #ddd;
    color: #212121;
    font-family: Lato, sans-serif;
    overflow: hidden;
}

.topo-cartao {
    display: flex;
    justify-content: space-between;
    height: 47px;
    padding: 0 17px 0 14px;
    border-bottom: 1px solid #dbdcdd;
    line-height: 48px;
}

.topo-cartao a {
    color: #37404f;
    font-family: "DejaVu Sans", Verdana, sans-serif;
    font-size: 11px;
    font-weight: bold;
    line-height: 44px;
}

.campos {
    padding: 15px 14px 14px;
}

.campos label {
    display: block;
    padding-bottom: 4px;
    font-size: 11px;
    font-weight: bold;
    line-height: 16px;
}

.campos input,
.campos select {
    display: block;
    width: 100%;
    border: 1px solid #dededf;
    border-radius: 4px;
    background: #fff;
    color: inherit;
    font: inherit;
}

.campos input {
    height: 33px;
    margin-bottom: 13px;
    padding: 0 14px;
}

.campos select {
    height: 30px;
    padding: 0 15px;
    appearance: none;
}

.caixa-tipo {
    position: relative;
}

.abrir {
    position: absolute;
    top: 1px;
    right: 1px;
    bottom: 1px;
    display: flex;
    align-items: center;
    justify-content: center;
    width: 17px;
    border: 1px solid #0078d7;
    background: #e5f1fb;
    pointer-events: none;
}

.rodape-cartao {
    padding: 14px;
    border-top: 1px solid #d4d4d5;
    background: #f3f4f5;
}

.rodape-cartao button {
    width: 72px;
    height: 36px;
    border-radius: 4px;
    background: #1678c2;
    color: #fff;
    font-size: 14px;
    font-weight: bold;
}

/* barra de tarefas */
.tarefas {
    display: flex;
    height: 40px;
    background: linear-gradient(90deg, #cfe2f0, #cfe6ef 30%, #d5e3ee 60%, #d3dfec);
    color: #111;
    font-family: "Open Sans", "Noto Sans", sans-serif;
}

.iniciar {
    width: 48px;
}

.procurar {
    display: flex;
    align-items: center;
    gap: 11px;
    width: 344px;
    padding: 0 11px;
    border: 1px solid #c3c7ca;
    background: #fff;
}

.procurar input {
    flex: 1;
    border: 0;
    padding: 0;
    background: none;
    font: inherit;
    font-size: 14px;
}

.procurar input::placeholder {
    color: #333;
}

.apps {
    display: flex;
    flex: 1;
}

.apps button {
    position: relative;
    width: 49px;
}

.rodando::after {
    content: "";
    position: absolute;
    left: 4px;
    right: 4px;
    bottom: 0;
    height: 2px;
    background: #0078d7;
}

.apps .foco {
    background: #dadde0;
    box-shadow: inset 4px 0 #a5dfa5;
}

.foco::after {
    left: 0;
    right: 0;
    background: #4ae03a;
}

.adobe {
    width: 22px;
    height: 22px;
    color: #7fd3ff;
    font-size: 11px;
    font-weight: bold;
    line-height: 22px;
}

.ps {
    background: linear-gradient(#0a86cf, #003f70);
}

.dw {
    background: linear-gradient(#6f9a1e, #3f5f10);
    color: #d8f57a;
}

.bandeja {
    display: flex;
    align-items: center;
    gap: 9px;
    padding-right: 4px;
    font-size: 11px;
}

.relogio {
    padding: 0 5px 0 4px;
    line-height: 18px;
    text-align: center;
}

.avisos {
    position: relative;
    width: 41px;
    height: 40px;
    padding-right: 14px;
    border-right: 1px solid #aab6c2;
}

.avisos span {
    position: absolute;
    top: 19px;
    right: 13px;
    width: 15px;
    height: 15px;
    border: 1px solid #777;
    border-radius: 50%;
    background: #d3deeb;
    font-size: 10px;
    line-height: 13px;
}
```
